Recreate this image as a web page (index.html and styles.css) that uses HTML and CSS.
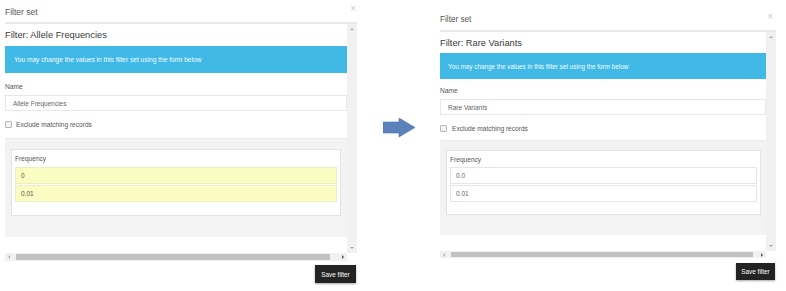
FILE: index.html
```html
<!DOCTYPE html>
<html>
<head>
<meta charset="utf-8">
<link rel="stylesheet" href="styles.css">
</head>
<body>
<div class="stage">
  <div class="panel panel-a">
    <div class="panel-head">
      <span class="panel-title">Filter set</span>
      <span class="close">&times;</span>
    </div>
    <div class="scroller">
      <div class="content">
        <h3 class="heading">Filter: Allele Frequencies</h3>
        <div class="alert">You may change the values in this filter set using the form below</div>
        <div class="label">Name</div>
        <div class="input">Allele Frequencies</div>
        <div class="check-row"><span class="checkbox"></span><span>Exclude matching records</span></div>
        <div class="well">
          <div class="box">
            <div class="label box-label">Frequency</div>
            <div class="input field field-yellow">0</div>
            <div class="input field field-yellow">0.01</div>
          </div>
        </div>
        <div class="spacer"></div>
      </div>
      <div class="vscroll">
        <span class="tri tri-up"></span>
        <span class="tri tri-down"></span>
      </div>
      <div class="hscroll">
        <span class="tri tri-left"></span>
        <span class="thumb"></span>
        <span class="tri tri-right"></span>
      </div>
      <div class="corner"></div>
    </div>
    <div class="footer"><button class="save">Save filter</button></div>
  </div>

  <div class="arrow-wrap">
    <svg class="arrow" width="32" height="20" viewBox="0 0 32 20">
      <polygon points="0,4 16,4 16,0 32,9.5 16,19 16,15 0,15" fill="#5b82bb" stroke="#4f75ad" stroke-width="0.6"/>
    </svg>
  </div>

  <div class="panel panel-b">
    <div class="panel-head">
      <span class="panel-title">Filter set</span>
      <span class="close">&times;</span>
    </div>
    <div class="scroller">
      <div class="content">
        <h3 class="heading">Filter: Rare Variants</h3>
        <div class="alert">You may change the values in this filter set using the form below</div>
        <div class="label">Name</div>
        <div class="input">Rare Variants</div>
        <div class="check-row"><span class="checkbox"></span><span>Exclude matching records</span></div>
        <div class="well">
          <div class="box">
            <div class="label box-label">Frequency</div>
            <div class="input field">0.0</div>
            <div class="input field">0.01</div>
          </div>
        </div>
        <div class="spacer"></div>
      </div>
      <div class="vscroll">
        <span class="tri tri-up"></span>
        <span class="tri tri-down"></span>
      </div>
      <div class="hscroll">
        <span class="tri tri-left"></span>
        <span class="thumb"></span>
        <span class="tri tri-right"></span>
      </div>
      <div class="corner"></div>
    </div>
    <div class="footer"><button class="save">Save filter</button></div>
  </div>
</div>
</body>
</html>
```

FILE: styles.css
```css
* { box-sizing: border-box; }
html, body { margin: 0; padding: 0; background: #fff; }
body {
  font-family: "Liberation Sans", Arial, sans-serif;
  color: #555;
  width: 786px;
  height: 291px;
  overflow: hidden;
}
.stage {
  display: flex;
  align-items: flex-start;
}

/* panel */
.panel {
  display: flex;
  flex-direction: column;
}
.panel-a { width: 352px; margin-left: 5px; margin-top: 2px; }
.panel-b { width: 336px; margin-top: 11px; }

.panel-head {
  border-bottom: 2px solid #e9e9e9;
  display: flex;
  justify-content: space-between;
  align-items: flex-start;
}
.panel-a .panel-head { height: 22px; }
.panel-b .panel-head { height: 21px; }
.panel-title {
  font-size: 8.5px;
  line-height: 12px;
  margin-top: 4px;
  color: #555;
}
.panel-b .panel-title { margin-top: 3px; font-size: 8.2px; }
.close {
  font-size: 10px;
  line-height: 10px;
  color: #c8c8c8;
  margin-top: 2px;
  margin-right: 1px;
}
.panel-b .close { margin-top: 1px; margin-right: 3px; }

.scroller {
  display: grid;
  grid-template-columns: 1fr 10px;
}
.panel-a .scroller { grid-template-rows: 229px 8px; }
.panel-b .scroller { grid-template-rows: 219px 7px; }

.content {
  overflow: hidden;
  background: #fff;
  display: flex;
  flex-direction: column;
}
.spacer { flex: 1; background: #fff; }

.heading {
  margin: 0;
  font-weight: normal;
  font-size: 9.3px;
  line-height: 14px;
  color: #3a3a3a;
}
.panel-a .heading { margin-top: 4px; }
.panel-b .heading { margin-top: 4px; }

.alert {
  background: #40b9e7;
  color: #f4fbff;
  font-size: 6.6px;
  display: flex;
  align-items: center;
  padding-left: 9px;
  flex: none;
}
.panel-a .alert { height: 27px; margin-top: 4px; }
.panel-b .alert { height: 26px; margin-top: 3px; padding-left: 8px; font-size: 6.35px; }

.label {
  font-size: 6.6px;
  line-height: 10px;
  color: #555;
}
.panel-a .content > .label { margin-top: 9px; }
.panel-b .content > .label { margin-top: 7px; }

.input {
  height: 16px;
  border: 1px solid #e8e8e8;
  font-size: 6.5px;
  color: #666;
  display: flex;
  align-items: center;
  padding-left: 7px;
  background: #fff;
  flex: none;
}
.content > .input { margin-top: 3px; }

.check-row {
  display: flex;
  align-items: center;
  height: 10px;
  margin-top: 8px;
  font-size: 6.6px;
  color: #555;
  flex: none;
}
.checkbox {
  width: 7px;
  height: 7px;
  border: 1px solid #b8b8b8;
  border-radius: 1px;
  background: #f4f4f4;
  margin-right: 4px;
}
.panel-b .checkbox { margin-right: 5px; }

.well {
  background: #f3f3f3;
  border-top: 1px solid #ececec;
  flex: none;
}
.panel-a .well { margin-top: 9px; height: 99px; padding: 10px 6px 0 6px; }
.panel-b .well { margin-top: 7px; height: 95px; padding: 9px 5px 0 6px; }

.box {
  background: #fff;
  border: 1px solid #e4e4e4;
  padding: 4px 3px 0 3px;
}
.panel-a .box { height: 67px; }
.panel-b .box { height: 65px; }
.box-label { margin-top: 0; }
.field {
  height: 17px;
  border-color: #e6e6e6;
  padding-left: 5px;
}
.box-label + .field { margin-top: 3px; }
.panel-b .box-label + .field { margin-top: 2px; }
.field + .field { margin-top: 1px; }
.field-yellow {
  background: #fafcc2;
  border-color: #ecefc0;
  color: #555;
}

/* scrollbars */
.vscroll {
  background: #f1f1f1;
  display: flex;
  flex-direction: column;
  justify-content: space-between;
  align-items: center;
  padding: 4px 0 4px 0;
}
.hscroll {
  background: #f1f1f1;
  display: flex;
  align-items: center;
  padding: 0 3px 0 3px;
}
.corner { background: #fff; }
.thumb {
  flex: 1;
  height: 6px;
  background: #c1c1c1;
  margin: 0 12px 0 6px;
}
.panel-b .thumb { height: 5px; margin: 0 8px 0 6px; }
.tri { width: 0; height: 0; display: block; }
.tri-up {
  border-left: 2px solid transparent;
  border-right: 2px solid transparent;
  border-bottom: 2px solid #a9a9a9;
}
.tri-down {
  border-left: 2px solid transparent;
  border-right: 2px solid transparent;
  border-top: 2px solid #a9a9a9;
}
.tri-left {
  border-top: 2px solid transparent;
  border-bottom: 2px solid transparent;
  border-right: 2px solid #b5b5b5;
}
.tri-right {
  border-top: 2px solid transparent;
  border-bottom: 2px solid transparent;
  border-left: 2px solid #505050;
}

.footer {
  display: flex;
  justify-content: flex-end;
}
.save {
  font-family: "Liberation Sans", Arial, sans-serif;
  background: #232323;
  color: #fff;
  border: none;
  font-size: 6.4px;
  padding: 0;
  box-shadow: 0 1px 2px rgba(0,0,0,0.35);
}
.panel-a .save { width: 41px; height: 18px; margin-top: 4px; margin-right: 1px; }
.panel-b .save { width: 39px; height: 17px; margin-top: 5px; margin-right: 1px; }

.arrow-wrap {
  width: 83px;
  padding-top: 118px;
  padding-left: 26px;
}
.arrow { display: block; }
```
